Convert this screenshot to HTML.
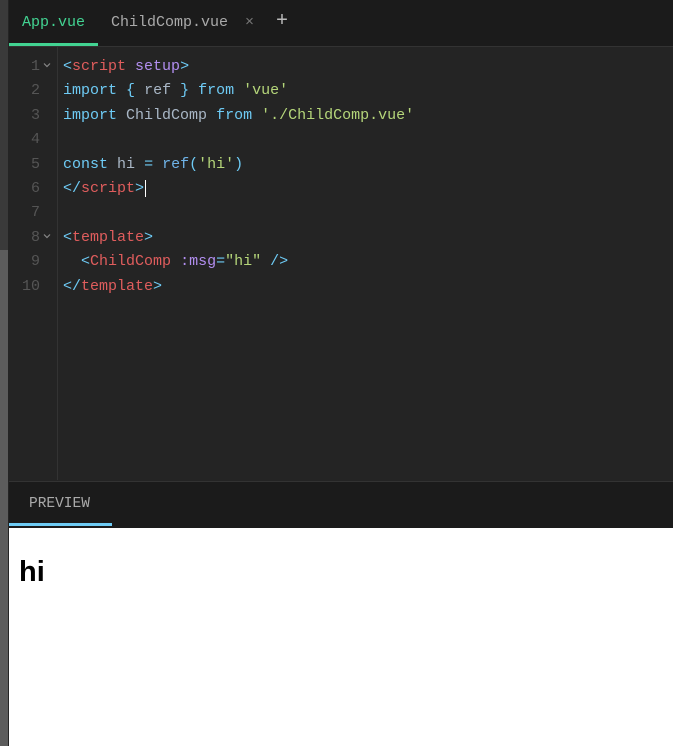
<!DOCTYPE html><html><head><style>
body{margin:0;width:673px;height:746px;overflow:hidden;background:#242424;position:relative;font-family:"Liberation Mono",monospace}
.strip{position:absolute;left:0;top:0;width:8px;height:746px;background:#3a3a3a}
.strip2{position:absolute;left:0;top:250px;width:8px;height:496px;background:#5c5c5c}
.tabs{position:absolute;left:9px;top:0;width:664px;height:46px;background:#1b1b1b;border-bottom:1px solid #333}
.tab{position:absolute;top:14px;font-size:15px;color:#aaa}
.ed{position:absolute;left:9px;top:47px;width:664px;height:433px;background:#242424}
.gut{position:absolute;left:48px;top:0;width:1px;height:433px;background:#333}
.code{position:absolute;left:54px;top:8px;font-size:15px;line-height:24.4px;white-space:pre;color:#ccc}
.n{position:absolute;left:0;top:8px;width:31px;font-size:15px;line-height:24.4px;white-space:pre;color:#555;text-align:right}
.chev{position:absolute;left:34px;width:8px;height:8px;color:#777}
.b{color:#6ecbf5}.r{color:#e05d5d}.p{color:#b28ef0}.g{color:#b5d67a}.w{color:#a9b7c6}.k{color:#6fb3e8}
.pv{position:absolute;left:9px;top:481px;width:664px;height:47px;background:#1b1b1b;border-top:1px solid #333}
</style></head><body>
<div class="strip"></div><div class="strip2"></div>
<div class="tabs">
<div class="tab" style="left:13px;color:#42d392">App.vue</div>
<div style="position:absolute;left:0;top:43px;width:89px;height:3px;background:#42d392"></div>
<div class="tab" style="left:102px">ChildComp.vue</div>
<div class="tab" style="left:236px;color:#777">×</div>
<div class="tab" style="left:267px;top:10px;font-size:20px;color:#bbb">+</div>
</div>
<div class="ed">
<div class="gut"></div>
<div class="n">1
2
3
4
5
6
7
8
9
10</div>
<svg class="chev" style="top:14px" viewBox="0 0 8 8"><path d="M1 2.5L4 5.5L7 2.5" fill="none" stroke="#888" stroke-width="1.2"/></svg>
<svg class="chev" style="top:185px" viewBox="0 0 8 8"><path d="M1 2.5L4 5.5L7 2.5" fill="none" stroke="#888" stroke-width="1.2"/></svg>
<div class="code"><span class="b">&lt;</span><span class="r">script</span> <span class="p">setup</span><span class="b">&gt;</span>
<span class="b">import</span> <span class="b">{</span> <span class="w">ref</span> <span class="b">}</span> <span class="b">from</span> <span class="g">'vue'</span>
<span class="b">import</span> <span class="w">ChildComp</span> <span class="b">from</span> <span class="g">'./ChildComp.vue'</span>

<span class="b">const</span> <span class="w">hi</span> <span class="b">=</span> <span class="k">ref</span><span class="b">(</span><span class="g">'hi'</span><span class="b">)</span>
<span class="b">&lt;/</span><span class="r">script</span><span class="b">&gt;</span><span style="border-left:1px solid #fff;margin-left:1px"> </span>

<span class="b">&lt;</span><span class="r">template</span><span class="b">&gt;</span>
  <span class="b">&lt;</span><span class="r">ChildComp</span> <span class="p">:msg</span><span class="b">=</span><span class="g">"hi"</span> <span class="b">/&gt;</span>
<span class="b">&lt;/</span><span class="r">template</span><span class="b">&gt;</span></div>
</div>
<div class="pv">
<div style="position:absolute;left:20px;top:14px;font-size:14.5px;color:#aaa">PREVIEW</div>
<div style="position:absolute;left:0;top:41px;width:103px;height:3px;background:#6ecbf5"></div>
</div>
<div style="position:absolute;left:9px;top:528px;width:664px;height:218px;background:#fff">
<div style="position:absolute;left:10px;top:28px;font:bold 29px 'Liberation Sans',sans-serif;color:#000">hi</div>
</div>
</body></html>
